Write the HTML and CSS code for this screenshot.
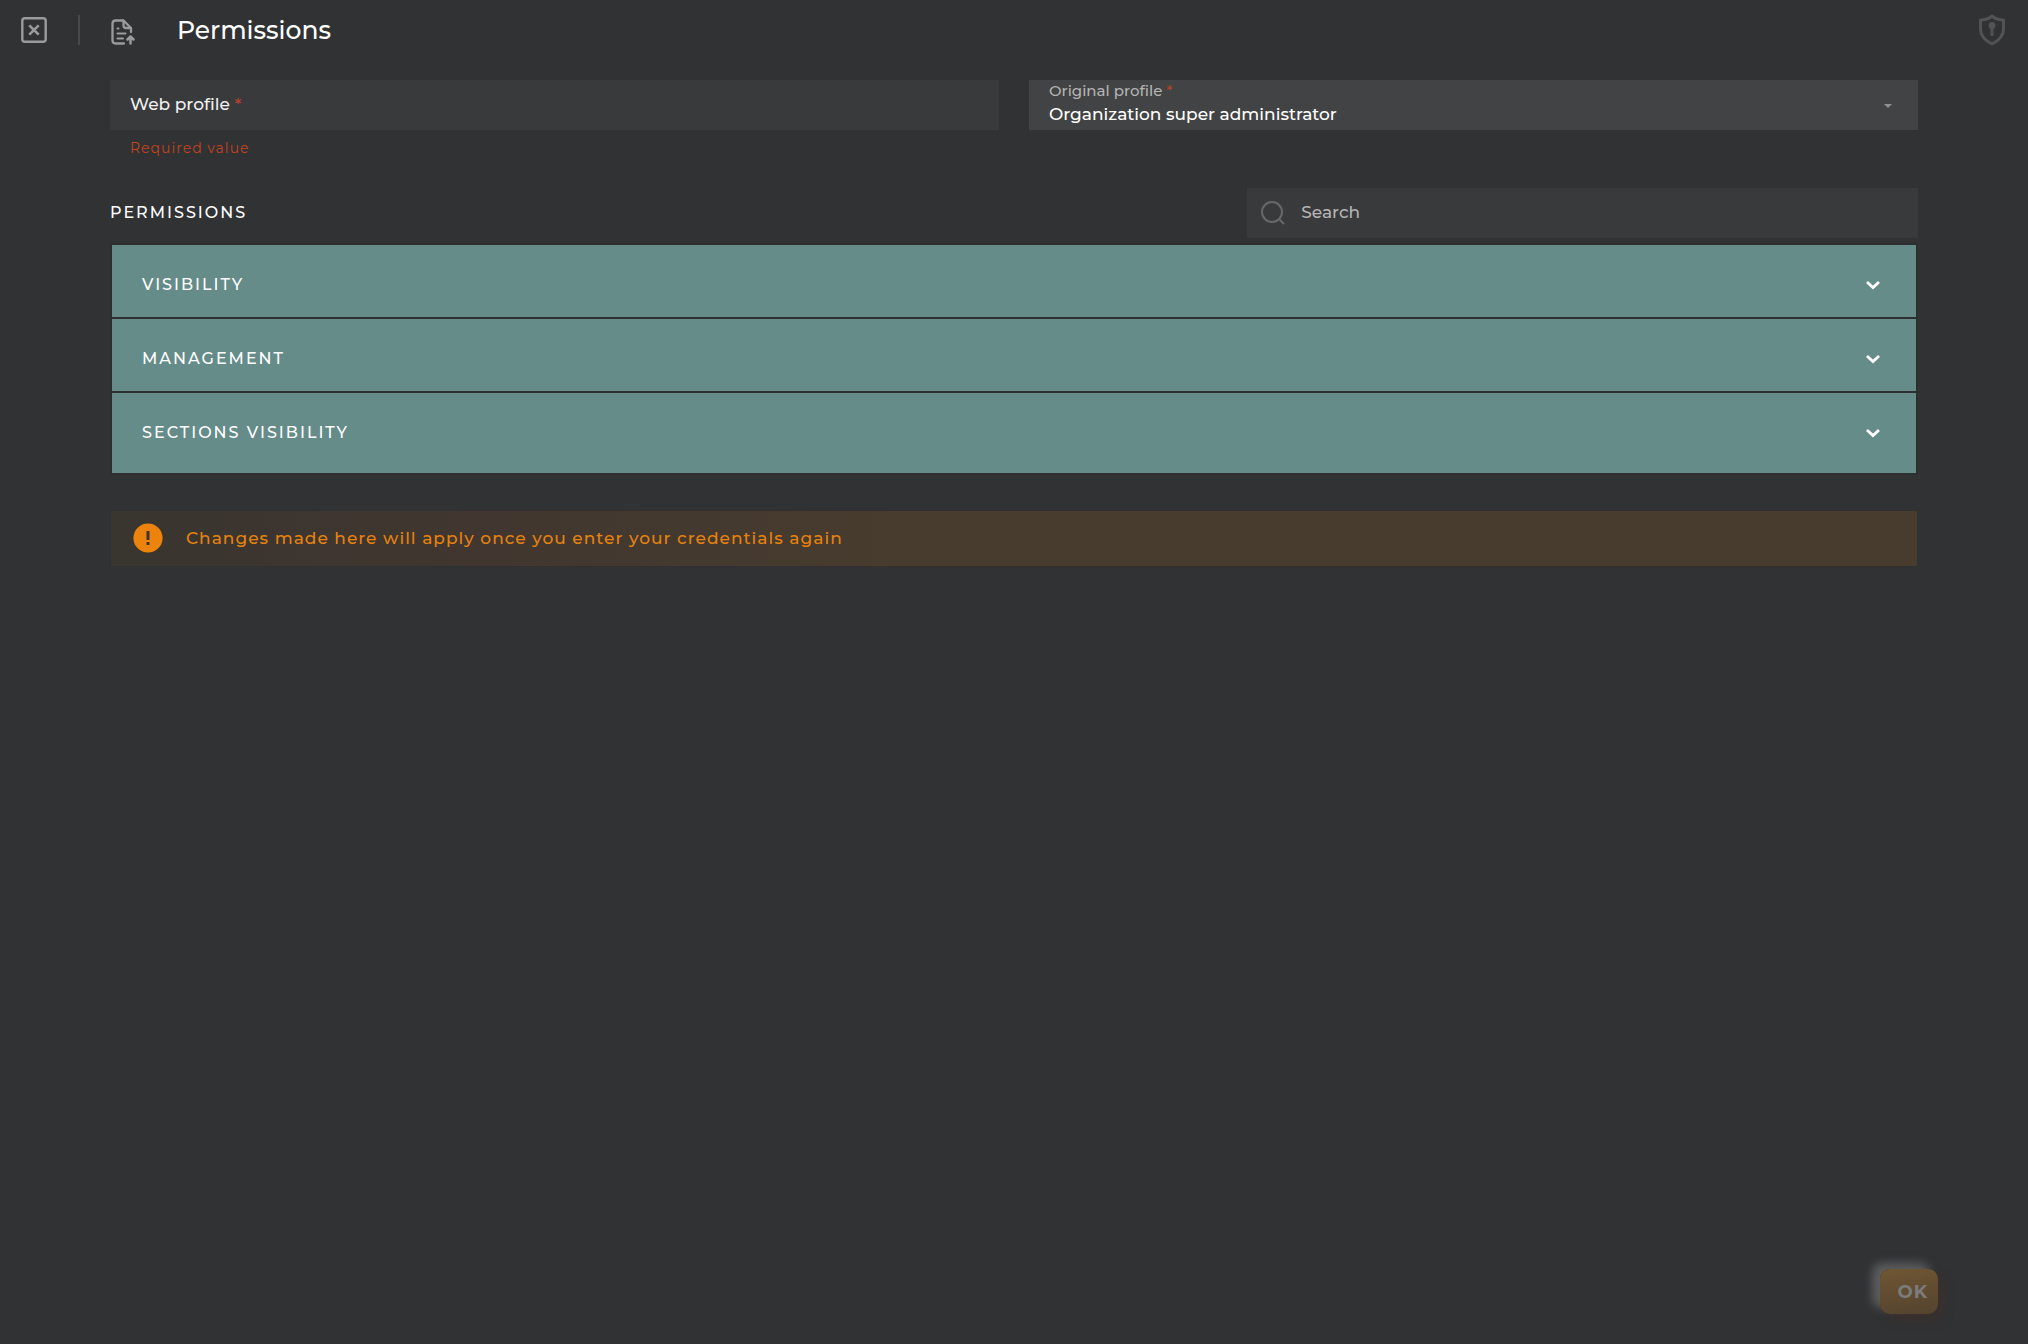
FILE: index.html
```html
<!DOCTYPE html>
<html lang="en">
<head>
<meta charset="utf-8">
<meta name="viewport" content="width=device-width, initial-scale=1">
<title>Permissions</title>
<link rel="stylesheet" href="styles.css">
</head>
<body>
<header class="topbar">
  <button class="icon-button close" type="button" aria-label="Close">
    <svg width="26" height="26" viewBox="0 0 26 26" fill="none" stroke="currentColor" stroke-width="2.400"><rect x="1.300" y="1.300" width="23.400" height="23.400" rx="2.500"/><path d="M8.300 8.300l9.400 9.400M17.700 8.300l-9.400 9.400" stroke-width="2.600"/></svg>
  </button>
  <span class="divider"></span>
  <svg class="doc-icon" width="24" height="26" viewBox="0 0 24 26" fill="none" stroke="currentColor" stroke-width="2.300" stroke-linecap="round" stroke-linejoin="round"><path d="M13 24.500H4.500Q1.500 24.500 1.500 21.500V4.500Q1.500 1.500 4.500 1.500H12.500L20 9V13"/><path d="M12.500 2V6.500Q12.500 9 15 9H19.500"/><path d="M6.500 9.500h1M6.500 14.500h8M6.500 19.500h5.500" stroke-width="2.100"/><path d="M19.500 24.500v-6M16.500 20.500l3-3 3 3" stroke-width="2.500"/></svg>
  <h1 class="title">Permissions</h1>
  <button class="icon-button shield" type="button" aria-label="Security">
    <svg width="28" height="32" viewBox="0 0 28 32"><path d="M14 2C11 4.500 7 6 2.500 6V15C2.500 21 7 26.500 14 30C21 26.500 25.500 21 25.500 15V6C21 6 17 4.500 14 2Z" fill="none" stroke="currentColor" stroke-width="3" stroke-linejoin="round"/><circle cx="14" cy="11.500" r="3.500" fill="currentColor"/><path d="M12.500 13h3v9h-3z" fill="currentColor"/></svg>
  </button>
</header>
<main class="content">
  <div class="fields">
    <div class="column">
      <div class="field">
        <label class="label" for="web-profile">Web profile <span class="star">*</span></label>
        <input class="control" id="web-profile" type="text" required>
      </div>
      <p class="error">Required value</p>
    </div>
    <div class="column">
      <div class="field filled">
        <label class="label small" for="original-profile">Original profile <span class="star">*</span></label>
        <select class="control select" id="original-profile" required><option>Organization super administrator</option></select>
        <svg class="caret" width="8" height="4" viewBox="0 0 8 4"><path d="M0 0h8L4 4z" fill="currentColor"/></svg>
      </div>
    </div>
  </div>
  <div class="section-head">
    <h2 class="section-title">PERMISSIONS</h2>
    <label class="search">
      <svg width="24" height="24" viewBox="0 0 24 24" fill="none" stroke="currentColor" stroke-width="2"><circle cx="11" cy="11" r="10"/><path d="M18 18l5 5"/></svg>
      <input class="search-input" type="search" placeholder="Search" aria-label="Search">
    </label>
  </div>
  <div class="accordion">
    <button class="panel" type="button" aria-expanded="false">VISIBILITY <svg width="14" height="10" viewBox="0 0 14 10" fill="none" stroke="currentColor" stroke-width="2.800"><path d="M1 2l6 5.500L13 2"/></svg></button>
    <button class="panel" type="button" aria-expanded="false">MANAGEMENT <svg width="14" height="10" viewBox="0 0 14 10" fill="none" stroke="currentColor" stroke-width="2.800"><path d="M1 2l6 5.500L13 2"/></svg></button>
    <button class="panel" type="button" aria-expanded="false">SECTIONS VISIBILITY <svg width="14" height="10" viewBox="0 0 14 10" fill="none" stroke="currentColor" stroke-width="2.800"><path d="M1 2l6 5.500L13 2"/></svg></button>
  </div>
  <div class="notice" role="status">
    <svg width="30" height="30" viewBox="0 0 30 30"><circle cx="15" cy="15" r="14.600" fill="#ec830d"/><path d="M13.500 8h3v9h-3zM13.500 19h3v3h-3z" fill="#3a3530"/></svg>
    <p class="notice-text">Changes made here will apply once you enter your credentials again</p>
  </div>
</main>
<footer class="actions">
  <button class="ok" type="button">OK</button>
</footer>
</body>
</html>
```
FILE: styles.css
```css
* {
  box-sizing: border-box;
}

body {
  margin: 0;
  min-height: 100vh;
  display: flex;
  flex-direction: column;
  background: #313234;
  color: #fff;
  font-family: Montserrat, Inter, sans-serif;
  font-size: 17px;
  font-weight: 500;
}

h1, h2, p {
  margin: 0;
}

button, input, select {
  font: inherit;
  color: inherit;
  border: 0;
  border-radius: 0;
  margin: 0;
}

.topbar {
  display: flex;
  align-items: center;
  height: 60px;
  padding: 0 22px 0 21px;
}

.icon-button {
  display: flex;
  padding: 0;
  background: none;
}

.close {
  color: #9b9b9b;
}

.divider {
  width: 2px;
  height: 30px;
  margin: 0 31px;
  background: #48494b;
}

.doc-icon {
  margin-top: 3px;
  color: #9b9b9b;
}

.title {
  margin-left: 42px;
  font-size: 25px;
  line-height: 32px;
  font-weight: 500;
}

.shield {
  margin-left: auto;
  color: #525354;
}

.content {
  flex: 1;
  padding: 20px 110px 0;
}

.fields {
  display: grid;
  grid-template-columns: 1fr 1fr;
  gap: 30px;
}

.field {
  display: grid;
  height: 50px;
  background: #393a3c;
}

.filled {
  background: #424344;
}

.label, .control, .caret {
  grid-area: 1 / 1;
}

.label {
  z-index: 1;
  align-self: start;
  justify-self: start;
  padding: 12px 20px 0;
  line-height: 24px;
  color: #f0f0f0;
  pointer-events: none;
}

.small {
  padding-top: 0;
  font-size: 15px;
  line-height: 22px;
  color: #b4b4b4;
}

.star {
  color: #b8432b;
}

.control {
  width: 100%;
  height: 50px;
  padding: 0 20px;
  background: transparent;
}

.select {
  padding-top: 18px;
  appearance: none;
}

.caret {
  align-self: center;
  justify-self: end;
  margin: 2px 26px 0;
  color: #909090;
  pointer-events: none;
}

.error {
  padding: 6px 20px 0;
  font-size: 14px;
  line-height: 24px;
  font-weight: 400;
  letter-spacing: 1px;
  color: #c24420;
}

.section-head {
  display: flex;
  align-items: center;
  justify-content: space-between;
  margin-top: 28px;
}

.section-title {
  font-size: 16px;
  line-height: 24px;
  font-weight: 500;
  letter-spacing: 2px;
  color: #fff;
}

.search {
  display: flex;
  align-items: center;
  gap: 16px;
  width: 37.1%;
  height: 50px;
  padding: 0 0 1px 14px;
  background: #393a3c;
  color: #686868;
}

.search-input {
  flex: 1;
  min-width: 0;
  padding: 0 0 1px;
  background: transparent;
  color: #b4b4b4;
}

.search-input::placeholder {
  color: #b4b4b4;
  opacity: 1;
}

.accordion {
  display: flex;
  flex-direction: column;
  gap: 2px;
  margin-top: 5px;
  border: 2px solid #2c2e2f;
  background: #2c2e2f;
}

.panel {
  display: flex;
  align-items: center;
  justify-content: space-between;
  height: 72px;
  padding: 7px 36px 0 30px;
  background: #668c8a;
  font-size: 16px;
  letter-spacing: 2px;
}

.panel:last-child {
  height: 80px;
  padding-bottom: 8px;
}

.notice {
  display: flex;
  align-items: center;
  gap: 23px;
  height: 57px;
  margin-top: 35px;
  padding: 0 22px 2px;
  border: 1px solid #2e3032;
  background: linear-gradient(90deg, #39352f, #403630 17%, #483c2e 45%);
}

.notice-text {
  font-size: 17px;
  line-height: 24px;
  letter-spacing: 1px;
  color: #e5820f;
}

.actions {
  display: flex;
  justify-content: flex-end;
  padding: 0 90px 30px;
}

.ok {
  height: 45px;
  padding: 0 10px 0 17px;
  border-radius: 10px;
  background: linear-gradient(170deg, #705633, #53432f);
  box-shadow: -8px -6px 10px #5c5d5e, 6px 6px 10px #3a302c;
  color: #7c7c7c;
  font-size: 18px;
  font-weight: 700;
  letter-spacing: 1px;
}
```
